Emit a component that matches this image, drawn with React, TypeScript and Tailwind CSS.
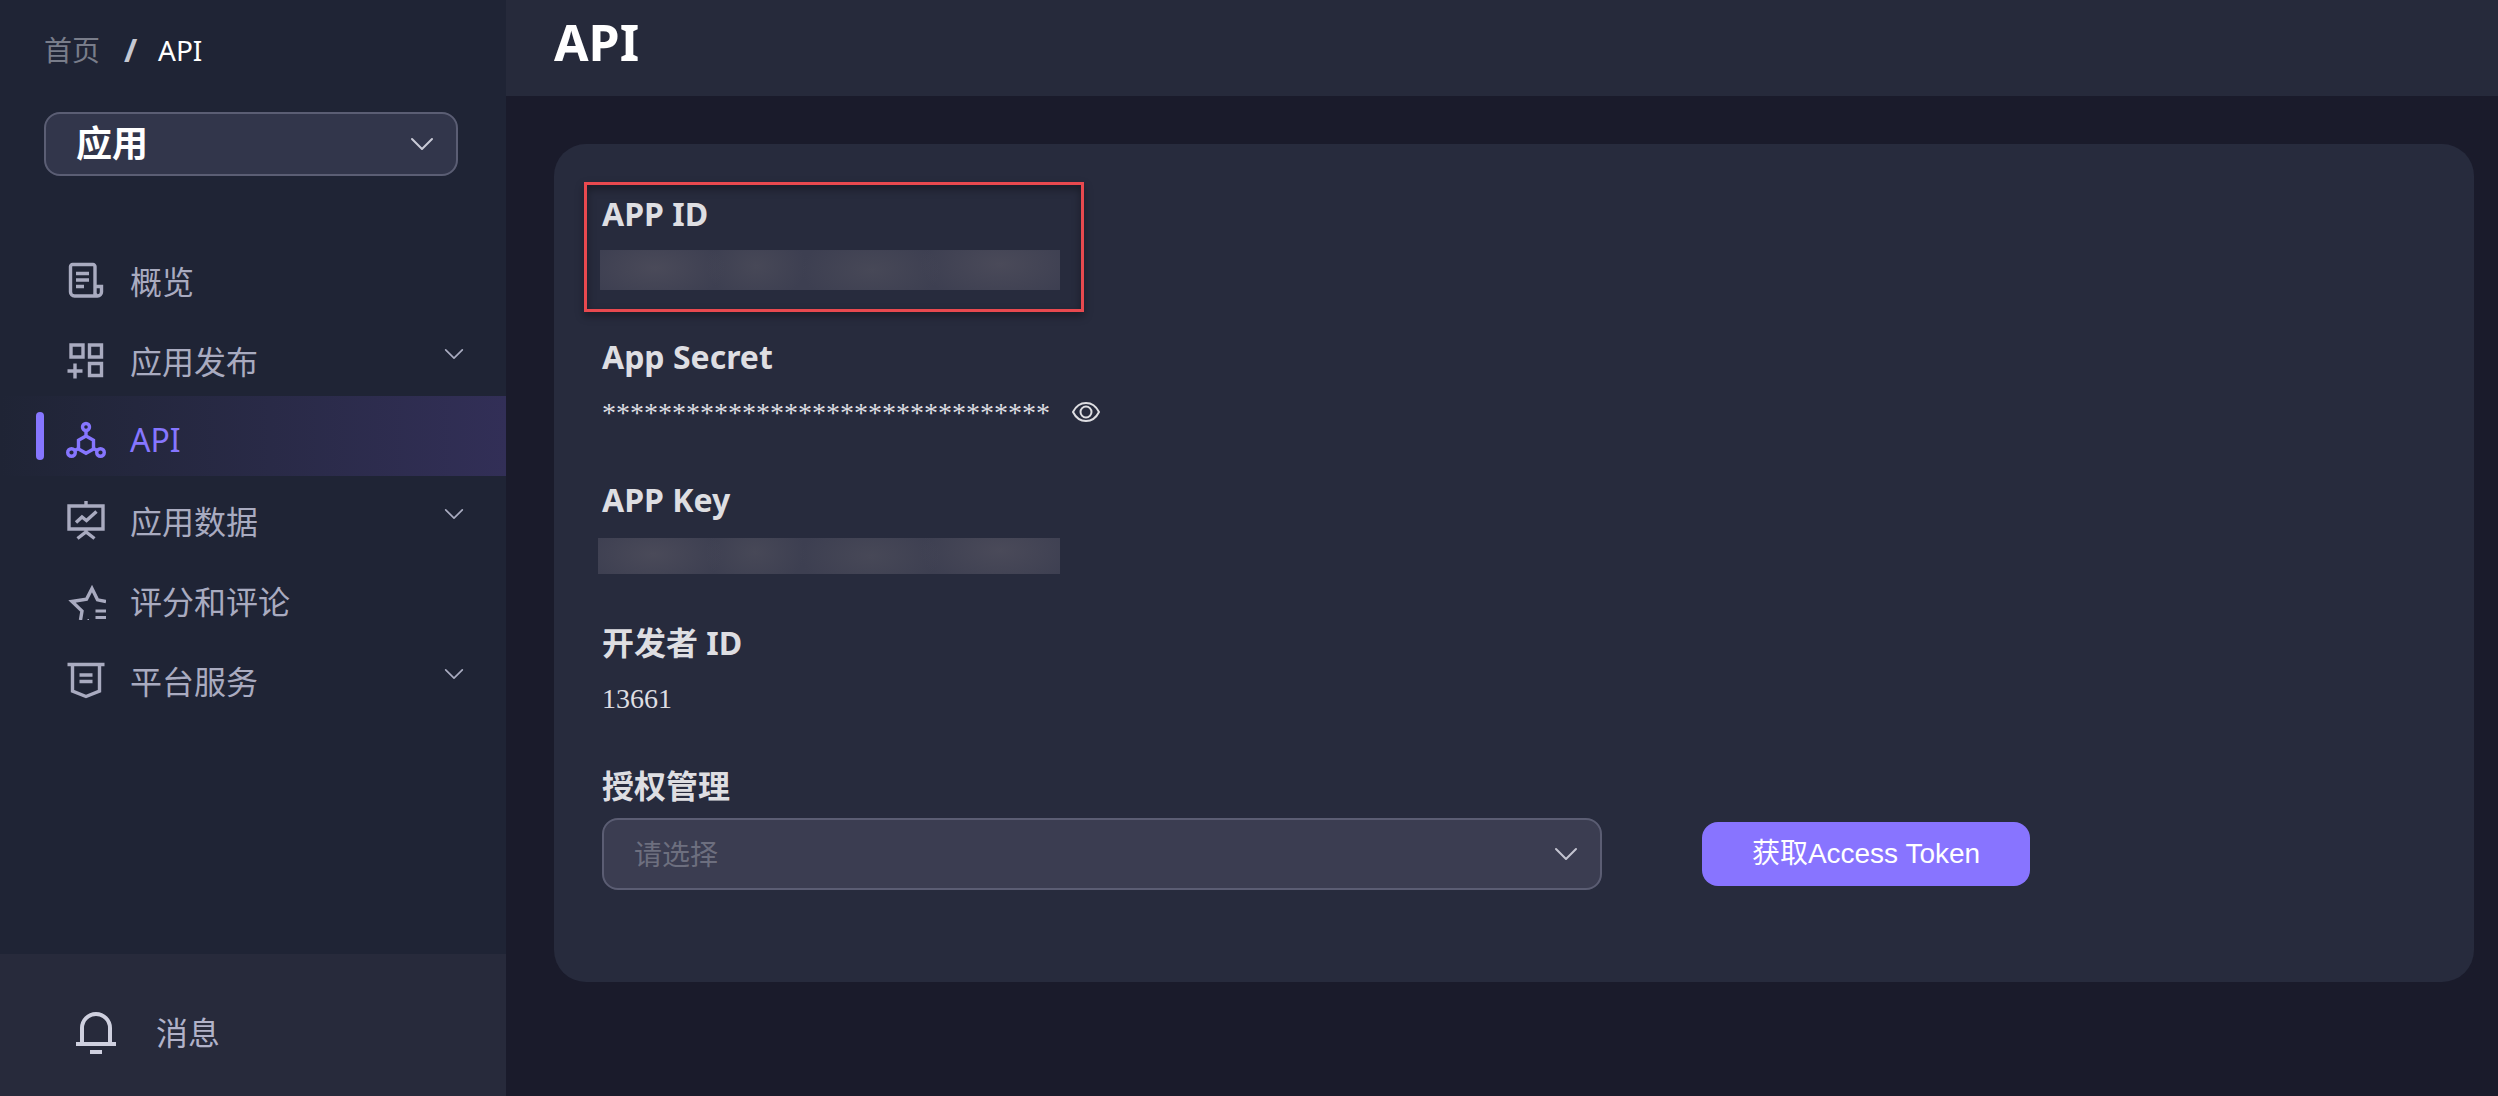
import { useState } from "react";
import type { ReactNode } from "react";
import clsx from "clsx";

interface NavItem {
    label: string;
    icon: ReactNode;
    active?: boolean;
    expandable?: boolean;
}

/* ─── Icons ─── */

function Icon({ children }: { children: ReactNode }) {
    return (
        <svg
            viewBox="0 0 40 40"
            fill="none"
            stroke="currentColor"
            strokeWidth={3.4}
            className="size-10 shrink-0"
            aria-hidden="true"
        >
            {children}
        </svg>
    );
}

function Chevron({ className }: { className?: string }) {
    return (
        <svg viewBox="0 0 24 24" fill="none" stroke="currentColor" className={className} aria-hidden="true">
            <path d="M2 7 12 17 22 7" strokeLinecap="round" strokeLinejoin="round" />
        </svg>
    );
}

function OverviewIcon() {
    return (
        <Icon>
            <path d="M29 26V6.500a2 2 0 0 0-2-2H6.500a2 2 0 0 0-2 2V32a4 4 0 0 0 4 4h23a4 4 0 0 0 4-4v-5.500H29V32a3 3 0 0 0 2 3.500" />
            <path d="M10 13.500h13M10 20h13M10 26.500h8" />
        </Icon>
    );
}

function PublishIcon() {
    return (
        <Icon>
            <path d="M5 5h12v12H5zM23.500 5h12v12h-12zM23.500 23.500h12v12h-12zM9 23.500v15M1.500 31h15" />
        </Icon>
    );
}

function ApiIcon() {
    return (
        <Icon>
            <circle cx="20" cy="7" r="3.500" />
            <circle cx="5.500" cy="32.500" r="3.800" />
            <circle cx="34.500" cy="32.500" r="3.800" />
            <path d="m20 16 7.500 4.300v8.600L20 33.200l-7.500-4.300v-8.600zM20 11v5M12.500 28.500 8.800 30.600M27.500 28.500l3.700 2.100" />
        </Icon>
    );
}

function DataIcon() {
    return (
        <Icon>
            <path d="M3 6h34v23H3zM20 1v4M11.500 38.500 20 32l8.500 6.500M20 29v4" />
            <path d="m10 22.500 6-5.500 4.500 3.500 10-9" />
        </Icon>
    );
}

function ReviewIcon() {
    return (
        <Icon>
            <path d="M40 21.500 31.500 19.800 26 8.500 20.500 19.300 6 21.500l10 9.500L14.500 40" />
            <path d="M29.500 31H40M29.500 37.500H40" strokeWidth={3} />
            <path d="M21.500 39.500h1.500" strokeWidth={1} />
        </Icon>
    );
}

function ServiceIcon() {
    return (
        <Icon>
            <path d="M1.500 4.500h37M6.500 4.500V31L20 36.500 33.500 31V4.500M13.500 15h13M13.500 21.500h13" />
        </Icon>
    );
}

function BellIcon() {
    return (
        <svg viewBox="0 0 40 44" fill="none" stroke="currentColor" strokeWidth={4} className="h-11 w-10 shrink-0" aria-hidden="true">
            <path d="M6 32V17a14 14 0 0 1 28 0v15M0 33h40M14 41h12" />
        </svg>
    );
}

function EyeIcon() {
    return (
        <svg viewBox="0 0 28 20" fill="none" stroke="currentColor" strokeWidth={2} className="h-5 w-7" aria-hidden="true">
            <path d="M1 10C4 4 8.500 1 14 1s10 3 13 9c-3 6-7.500 9-13 9S4 16 1 10z" strokeLinejoin="round" />
            <circle cx="14" cy="10" r="5.500" />
        </svg>
    );
}

const NAV_ITEMS: NavItem[] = [
    { label: "概览", icon: <OverviewIcon /> },
    { label: "应用发布", icon: <PublishIcon />, expandable: true },
    { label: "API", icon: <ApiIcon />, active: true },
    { label: "应用数据", icon: <DataIcon />, expandable: true },
    { label: "评分和评论", icon: <ReviewIcon /> },
    { label: "平台服务", icon: <ServiceIcon />, expandable: true },
];

/* ─── Sidebar ─── */

function Sidebar() {
    return (
        <aside className="flex w-[506px] shrink-0 flex-col bg-[#1f2435]">
            <nav aria-label="breadcrumb" className="flex items-center pt-[30px] pl-11 text-[28px] leading-10">
                <a href="#home" className="text-[#797d8a]">首页</a>
                <span className="ml-6 w-[34px] text-[32px] font-bold text-[#c5c8d2]">/</span>
                <span className="text-white">API</span>
            </nav>

            <div className="relative mr-12 ml-11 mt-[42px]">
                <select
                    aria-label="应用"
                    className="h-16 w-full appearance-none rounded-2xl border-2 border-[#5b5e74] bg-[#32364b] px-[30px] text-4xl font-bold text-white"
                >
                    <option>应用</option>
                </select>
                <Chevron className="pointer-events-none absolute top-5 right-6 size-6 stroke-2 text-[#c9cad6]" />
            </div>

            <ul className="mt-[60px] text-[32px] leading-10 text-[#a9abc0]">
                {NAV_ITEMS.map((item) => (
                    <li key={item.label}>
                        <a
                            href="#nav"
                            className={clsx(
                                "flex h-20 items-center pr-[42px] pl-9",
                                item.active && "bg-linear-to-r from-[#1f2435] to-[#322f57] text-[#8676ff]"
                            )}
                        >
                            <span className={clsx("h-12 w-2 rounded-full", item.active && "bg-[#8676ff]")} />
                            <span className="ml-[22px] flex grow items-center gap-6 pt-2">
                                {item.icon}
                                <span className={clsx(!item.active && "pt-1")}>{item.label}</span>
                            </span>
                            {item.expandable && <Chevron className="mb-1 size-5 stroke-2 text-[#a9abc0]" />}
                        </a>
                    </li>
                ))}
            </ul>

            <a
                href="#messages"
                className="mt-auto flex h-[142px] items-center gap-10 bg-[#272a3b] pt-4 pl-[76px] text-[32px] leading-10 text-[#b1b2c9]"
            >
                <span className="text-[#cfd0df]">
                    <BellIcon />
                </span>
                消息
            </a>
        </aside>
    );
}

/* ─── Credentials ─── */

function Field({ label, children }: { label: string; children: ReactNode }) {
    return (
        <div className="relative">
            <dt className="text-[32px] leading-[44px] font-bold">{label}</dt>
            <dd className="mt-4 flex h-9 items-center font-[Liberation_Serif,Noto_Sans_CJK_SC,serif] text-[28px] leading-9">
                {children}
            </dd>
        </div>
    );
}

function Masked({ className }: { className?: string }) {
    return (
        <span
            className={clsx(
                "shrink-0 bg-[#3d3f51] bg-[radial-gradient(70px_36px_at_12%_45%,#4a4a59,transparent),radial-gradient(50px_36px_at_34%_40%,#474857,transparent),radial-gradient(70px_36px_at_59%_50%,#474857,transparent),radial-gradient(80px_40px_at_87%_35%,#4a4a59,transparent)]",
                className
            )}
        />
    );
}

export default function App() {
    const [revealed, setRevealed] = useState(false);

    return (
        <div className="flex min-h-screen bg-[#1a1b2b] font-[Noto_Sans,Noto_Sans_CJK_SC,sans-serif]">
            <Sidebar />

            <div className="min-w-0 grow">
                <header className="flex h-24 items-start bg-[#262a3b] pl-12">
                    <h1 className="pt-2 text-[50px] leading-[68px] font-bold text-white">API</h1>
                </header>

                <main className="pt-12 pr-6 pb-12 pl-12">
                    <section className="rounded-[32px] bg-[#272b3d] px-12 pt-12 pb-[92px] text-[#dedee2]">
                        <dl className="flex flex-col gap-[47px]">
                            <Field label="APP ID">
                                <Masked className="-ml-0.5 h-10 w-[460px]" />
                                <span className="pointer-events-none absolute -top-2.5 -left-[18px] h-[130px] w-[500px] border-3 border-[#e8494f] shadow-[0_4px_8px_rgba(0,0,0,0.35),inset_0_4px_8px_rgba(0,0,0,0.35)]" />
                            </Field>
                            <Field label="App Secret">
                                ********************************
                                <button
                                    type="button"
                                    aria-label="显示 App Secret"
                                    aria-pressed={revealed}
                                    onClick={() => setRevealed(!revealed)}
                                    className="ml-[22px] pb-0.5"
                                >
                                    <EyeIcon />
                                </button>
                            </Field>
                            <Field label="APP Key">
                                <Masked className="-ml-1 h-9 w-[462px]" />
                            </Field>
                            <Field label="开发者 ID">13661</Field>
                        </dl>

                        <label htmlFor="grant" className="mt-[47px] block text-[32px] leading-[44px] font-bold">
                            授权管理
                        </label>
                        <div className="mt-2.5 flex items-center gap-[100px]">
                            <div className="relative w-[1000px]">
                                <select
                                    id="grant"
                                    className="h-[72px] w-full appearance-none rounded-2xl border-2 border-[#5b5d73] bg-[#3b3d51] px-[30px] text-[28px] text-[#6d6f7f]"
                                >
                                    <option>请选择</option>
                                </select>
                                <Chevron className="pointer-events-none absolute top-6 right-6 size-6 stroke-2 text-[#c3c4d0]" />
                            </div>
                            <button
                                type="button"
                                className="h-16 w-[328px] shrink-0 rounded-2xl bg-[#8874ff] font-[Liberation_Sans,Noto_Sans_CJK_SC,sans-serif] text-[28px] text-white"
                            >
                                获取Access Token
                            </button>
                        </div>
                    </section>
                </main>
            </div>
        </div>
    );
}
